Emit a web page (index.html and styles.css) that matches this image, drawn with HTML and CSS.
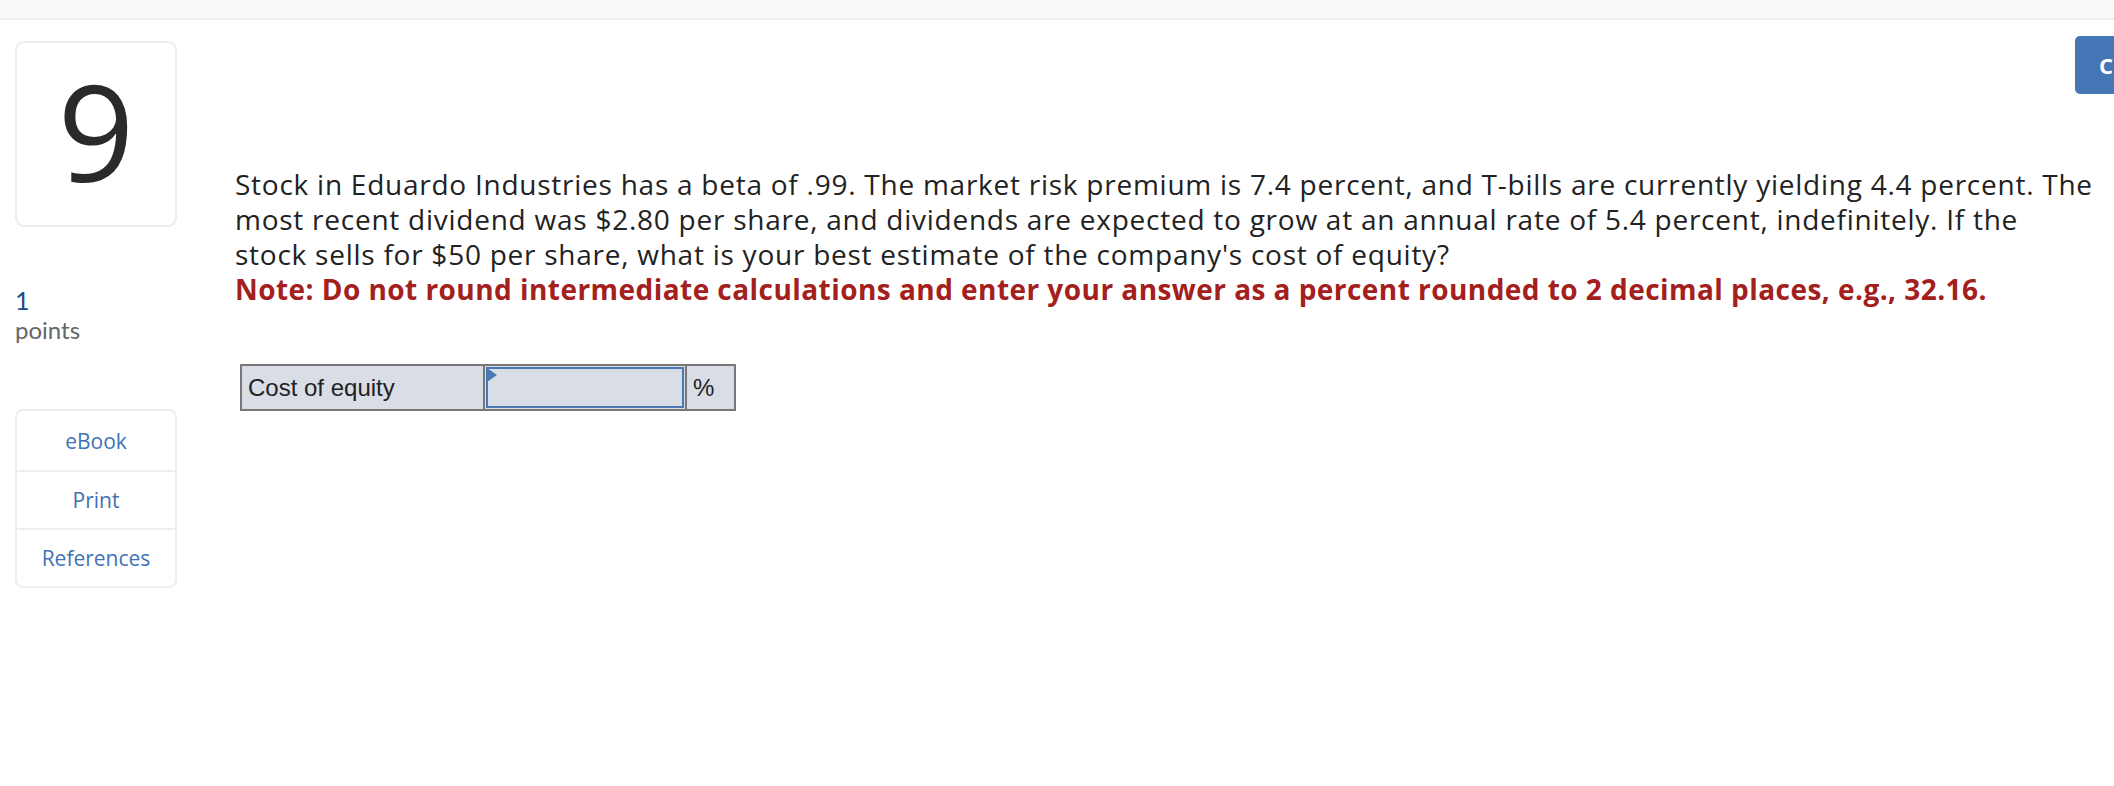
FILE: index.html
```html
<!DOCTYPE html>
<html>
<head>
<meta charset="utf-8">
<link rel="stylesheet" href="styles.css">
</head>
<body>
<div class="topbar"></div>
<div class="page">
  <aside class="side">
    <div class="qnum">9</div>
    <div class="pts"><span class="pts-val">1</span><span class="pts-label">points</span></div>
    <ul class="links">
      <li><a>eBook</a></li>
      <li><a>Print</a></li>
      <li><a>References</a></li>
    </ul>
  </aside>
  <main class="content">
    <div class="head"><button class="check">Check my work</button></div>
    <p class="question">Stock in Eduardo Industries has a beta of .99. The market risk premium is 7.4 percent, and T-bills are currently yielding 4.4 percent. The most recent dividend was $2.80 per share, and dividends are expected to grow at an annual rate of 5.4 percent, indefinitely. If the<br>stock sells for $50 per share, what is your best estimate of the company's cost of equity?<br><span class="note">Note: Do not round intermediate calculations and enter your answer as a percent rounded to 2 decimal places, e.g., 32.16.</span></p>
    <table class="answer">
      <tr>
        <td class="lbl">Cost of equity</td>
        <td class="inp"><span class="flag"></span></td>
        <td class="unit">%</td>
      </tr>
    </table>
  </main>
</div>
</body>
</html>
```
FILE: styles.css
```css
html, body {
  margin: 0;
  padding: 0;
  background: #fff;
  overflow: hidden;
}
body {
  font-family: "Open Sans", "Lato", sans-serif;
  color: #222;
}
.topbar {
  height: 18px;
  background: #fafafa;
  border-bottom: 2px solid #eeeeee;
}
.page {
  display: flex;
  align-items: flex-start;
  padding-left: 15px;
}
.side {
  width: 162px;
  flex: none;
  padding-top: 21px;
}
.qnum {
  box-sizing: border-box;
  height: 186px;
  border: 2px solid #eeeeee;
  border-radius: 9px;
  display: flex;
  align-items: center;
  justify-content: center;
  font-family: "Open Sans", sans-serif;
  font-size: 134px;
  line-height: 1;
  color: #2a2a2a;
  font-weight: 500;
  padding-bottom: 8px;
}
.pts {
  display: flex;
  flex-direction: column;
  margin-top: 58px;
  font-family: "Lato", sans-serif;
}
.pts-val {
  font-size: 25px;
  line-height: 30px;
  color: #1e4a86;
}
.pts-label {
  font-size: 24px;
  line-height: 30px;
  color: #666;
}
.links {
  list-style: none;
  margin: 64px 0 0;
  padding: 0;
  border: 2px solid #eeeeee;
  border-radius: 8px;
  font-family: "Open Sans", sans-serif;
}
.links li {
  display: flex;
  align-items: center;
  justify-content: center;
  height: 56px;
  font-size: 21px;
  color: #3f72b5;
}
.links li + li {
  border-top: 2px solid #eeeeee;
}
.links li:first-child { height: 59px; }
.content {
  margin-left: 58px;
  width: 1990px;
  flex: none;
}
.head {
  display: flex;
  justify-content: flex-start;
  padding-top: 16px;
  padding-left: 1840px;
}
.check {
  height: 58px;
  padding: 0 24px;
  background: #4475b4;
  color: #fff;
  border: none;
  border-radius: 5px;
  font-family: "Open Sans", sans-serif;
  font-weight: 700;
  font-size: 22px;
  white-space: nowrap;
}
.question {
  margin: 73px 0 0;
  width: 1885px;
  font-size: 28px;
  line-height: 35px;
  letter-spacing: 0.75px;
  color: #222;
}
.note {
  color: #a3201d;
  font-weight: 700;
  letter-spacing: 0.45px;
}
.answer {
  margin: 57px 0 0 5px;
  border-collapse: collapse;
  font-family: "Liberation Sans", Arial, sans-serif;
  font-size: 24px;
  color: #222;
}
.answer td {
  border: 2px solid #777;
  background: #d9dde6;
  height: 43px;
  padding: 0;
}
.lbl {
  width: 235px;
  padding-left: 6px !important;
}
.inp {
  width: 200px;
  position: relative;
  outline: 2px solid #4a78b5;
  outline-offset: -4px;
}
.flag {
  position: absolute;
  left: 2px;
  top: 2px;
  width: 0;
  height: 0;
  border-top: 7px solid transparent;
  border-bottom: 7px solid transparent;
  border-left: 10px solid #4a78b5;
}
.unit {
  width: 41px;
  padding-left: 6px !important;
}
```
